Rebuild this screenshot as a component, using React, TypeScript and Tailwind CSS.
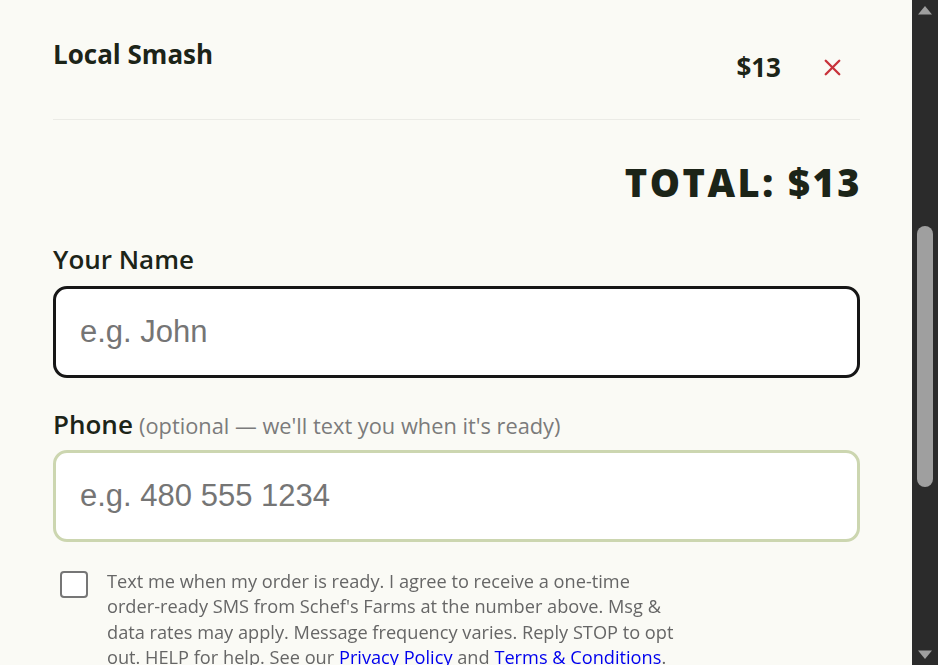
import { X } from 'lucide-react'

const sans = 'font-["Open_Sans","Noto_Sans",sans-serif]'

export default function App() {
  return (
    <div className="flex h-[665px] w-full overflow-hidden bg-[#fafaf5]">
      <main className={`flex-1 pl-[53px] pr-[52px] ${sans} text-[#1c2418]`}>
        <div className="flex items-start justify-between border-b border-[#ebebe6] pt-[34px] pb-[32px]">
          <h3 className="text-[26px] font-bold leading-[40px]">Local Smash</h3>
          <div className="flex items-center gap-[38px] pt-[13px] pr-[14px]">
            <span className="text-[26px] font-bold leading-[40px]">$13</span>
            <button className="text-[#c8333b]">
              <X size={27} strokeWidth={2.1} />
            </button>
          </div>
        </div>

        <div className="-mr-[2px] mt-[38px] text-right text-[38px] leading-[48px] font-extrabold tracking-[2.5px]">
          TOTAL: $13
        </div>

        <label className="mt-[35px] block text-[26px] leading-[36px] font-semibold">Your Name</label>
        <input
          autoFocus
          placeholder="e.g. John"
          className="mt-[9px] block h-[92px] w-full rounded-[14px] border-[3px] border-[#161616] bg-white px-[24px] font-['Liberation_Sans',sans-serif] text-[31px] text-[#1c2418] caret-black outline-none placeholder:text-[#757575]"
        />

        <label className="mt-[28px] block leading-[36px]">
          <span className="text-[26px] font-semibold">Phone</span>{' '}
          <span className="ml-[2px] text-[21.8px] text-[#7b7b7b]">(optional — we'll text you when it's ready)</span>
        </label>
        <input
          placeholder="e.g. 480 555 1234"
          className="mt-[4px] block h-[92px] w-full rounded-[14px] border-[3px] border-[#ccd6b0] bg-white px-[24px] font-['Liberation_Sans',sans-serif] text-[31px] text-[#1c2418] outline-none placeholder:text-[#757575]"
        />

        <label className="mt-[27px] flex items-start gap-[19px] pl-[7px]">
          <span className="mt-[2px] h-[27px] w-[28px] shrink-0 rounded-[4px] border-2 border-[#767676] bg-white" />
          <span className="max-w-[580px] text-[18.2px] leading-[25.4px] text-[#666666]">
            Text me when my order is ready. I agree to receive a one-time order-ready SMS from Schef's Farms at the
            number above. Msg &amp; data rates may apply. Message frequency varies. Reply STOP to opt out. HELP for
            help. See our <a href="#" className="text-[#0000ee]">Privacy Policy</a> and{' '}
            <a href="#" className="text-[#0000ee]">Terms &amp; Conditions</a>.
          </span>
        </label>
      </main>

      <aside className="flex w-[26px] shrink-0 flex-col items-center bg-[#2b2b2b] py-[6px]">
        <svg width="14" height="9" viewBox="0 0 14 9" className="fill-[#9f9f9f]">
          <path d="M7 0L14 8.5H0Z" />
        </svg>
        <div className="mt-[211px] h-[261px] w-[16px] rounded-full bg-[#9f9f9f]" />
        <div className="flex-1" />
        <svg width="14" height="9" viewBox="0 0 14 9" className="fill-[#9f9f9f]">
          <path d="M7 9L14 0.5H0Z" />
        </svg>
      </aside>
    </div>
  )
}
